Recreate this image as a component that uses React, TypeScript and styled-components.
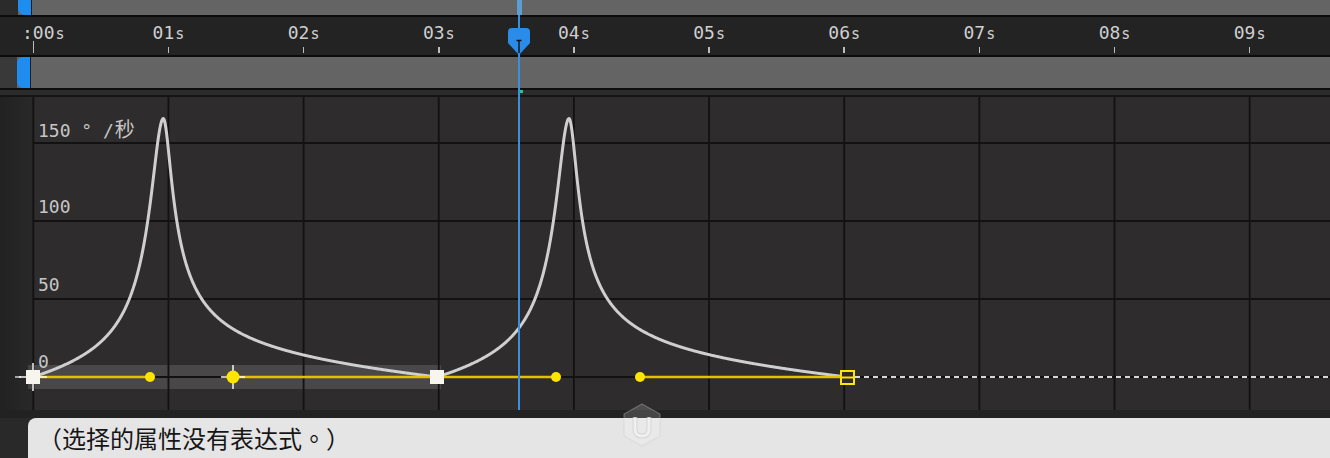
import React from "react";
import styled, { createGlobalStyle } from "styled-components";

const GlobalStyle = createGlobalStyle`
  html, body { margin: 0; padding: 0; background: #1f1f1f; }
  #root { width: 1330px; height: 458px; }
`;

const X0 = 33.3;
const STEP = 135.15;
const TICKS = Array.from({ length: 10 }, (_, i) => X0 + STEP * i);
const LABELS = [":00", "01", "02", "03", "04", "05", "06", "07", "08", "09"];
const PLAYHEAD_X = 519;

const Frame = styled.div`
  position: relative;
  width: 1330px;
  height: 458px;
  overflow: hidden;
  display: flex;
  flex-direction: column;
  background: #1f1f1f;
  font-family: "DejaVu Sans Mono", "Noto Sans CJK SC", monospace;
`;

const BarRow = styled.div<{ $h: number }>`
  display: flex;
  height: ${(p) => p.$h}px;
  flex: none;
`;

const Gutter = styled.div<{ $w: number; $bg: string }>`
  width: ${(p) => p.$w}px;
  flex: none;
  background: ${(p) => p.$bg};
`;

const Track = styled.div`
  flex: 1;
  display: flex;
  background: #646464;
`;

const Handle = styled.div<{ $top?: boolean }>`
  width: 13px;
  flex: none;
  background: #1f8cf0;
  border-right: 1px solid #1c1c1c;
  border-radius: ${(p) => (p.$top ? "0 0 0 7px" : "6px 0 0 6px")};
`;

const Rule = styled.div<{ $h?: number }>`
  height: ${(p) => p.$h ?? 2}px;
  flex: none;
  background: #0c0c0c;
`;

const Ruler = styled.div`
  position: relative;
  height: 38px;
  flex: none;
  background: #232323;
`;

const RulerLabel = styled.div<{ $first?: boolean }>`
  position: absolute;
  top: 7px;
  font-size: 18px;
  line-height: 18px;
  color: #cfcfcf;
  white-space: nowrap;
  transform: ${(p) => (p.$first ? "none" : "translateX(-50%)")};
`;

const Unit = styled.span`
  font-size: 15px;
  margin-left: 1px;
`;

const Tick = styled.div<{ $long?: boolean }>`
  position: absolute;
  bottom: 2px;
  width: 1.5px;
  height: ${(p) => (p.$long ? 12 : 6)}px;
  background: #bdbdbd;
`;

const Separator = styled.div`
  height: 9px;
  flex: none;
  background: #2b2b2b;
  border-top: 2px solid #0e0e0e;
  border-bottom: 2px solid #141414;
  box-sizing: border-box;
`;

const GraphArea = styled.div`
  position: relative;
  height: 313px;
  flex: none;
  background: #2e2c2c;
`;

const GraphSvg = styled.svg`
  display: block;
`;

const AxisLabel = styled.div`
  position: absolute;
  left: 38px;
  font-size: 18px;
  line-height: 18px;
  color: #c6c6c6;
  white-space: pre;
`;

const PerSecond = styled.span`
  font-family: "Noto Sans CJK SC", sans-serif;
  font-size: 20px;
  margin-left: 1px;
`;

const BottomStrip = styled.div`
  height: 8px;
  flex: none;
  background: #232222;
`;

const Footer = styled.div`
  flex: 1;
  display: flex;
  background: #2a2929;
`;

const Panel = styled.div`
  flex: 1;
  margin-left: 28px;
  padding-left: 10px;
  background: #e6e5e6;
  border-radius: 8px 0 0 0;
  font-family: "Noto Sans CJK SC", "Noto Sans", sans-serif;
  font-size: 24px;
  line-height: 40px;
  color: #161616;
`;

const CenteredStop = styled.span`
  font-family: "Noto Sans CJK TC", "Noto Sans CJK SC", sans-serif;
`;

const Playhead = styled.div`
  position: absolute;
  top: 0;
  left: ${PLAYHEAD_X}px;
  width: 0;
  height: 410px;
  pointer-events: none;
`;

const PlayLineTop = styled.div`
  position: absolute;
  top: 0;
  left: -2.5px;
  width: 5px;
  height: 15px;
  background: #5d9dd6;
`;

const PlayLine = styled.div`
  position: absolute;
  top: 15px;
  left: -0.75px;
  width: 1.5px;
  height: 395px;
  background: #3b90dc;
`;

const PlayHead = styled.svg`
  position: absolute;
  top: 28px;
  left: -11px;
`;

const GreenDot = styled.div`
  position: absolute;
  top: 90px;
  left: 1px;
  width: 3px;
  height: 3px;
  background: #2fc38a;
`;

const Watermark = styled.svg`
  position: absolute;
  left: 622px;
  top: 403px;
  pointer-events: none;
`;

type Pt = [number, number];

const GY = 97;
const BASE = 377;
const HEIGHT = 258.5;

function sideValue(d: number, D: number, q: number, w: number): number {
  const f = (x: number) => Math.pow(1 + (x / w) * (x / w), -q);
  return Math.max(0, f(d) - (f(D) * d) / D);
}

function speedCurve(peak: number, left: number, right: number): string {
  const pts: Pt[] = [];
  for (let x = left; x <= right + 0.01; x += 0.5) {
    const d = x - peak;
    const v = d < 0 ? sideValue(-d, peak - left, 0.55, 13) : sideValue(d, right - peak, 0.36, 7.8);
    pts.push([x, BASE - HEIGHT * v - GY]);
  }
  pts.push([peak, BASE - HEIGHT - GY]);
  pts.sort((a, b) => a[0] - b[0]);
  return pts.map(([x, y], i) => `${i ? "L" : "M"}${x.toFixed(2)} ${y.toFixed(2)}`).join(" ");
}

const ZERO = BASE - GY;
const YELLOW = "#e2c100";
const DOT = "#ffe500";

function Cross({ x, y, r }: { x: number; y: number; r: number }) {
  return (
    <g stroke="#ffffff" strokeWidth={1.6} opacity={0.9}>
      <line x1={x - r} y1={y} x2={x + r} y2={y} />
      <line x1={x} y1={y - r} x2={x} y2={y + r} />
    </g>
  );
}

function Graph() {
  const hLines = [46, 124, 202, ZERO];
  return (
    <GraphSvg width={1330} height={313} viewBox="0 0 1330 313">
      <defs>
        <linearGradient id="gutterShade" x1="0" x2="1" y1="0" y2="0">
          <stop offset="0" stopColor="#222121" />
          <stop offset="1" stopColor="#2a2929" />
        </linearGradient>
      </defs>
      <rect x={0} y={0} width={33} height={313} fill="url(#gutterShade)" />
      {/* selection band */}
      <rect x={28} y={268} width={413} height={24} fill="rgba(255,255,255,0.13)" />
      {hLines.map((y) => (
        <line key={y} x1={33} y1={y} x2={1330} y2={y} stroke="#131212" strokeWidth={1.8} />
      ))}
      {TICKS.map((x) => (
        <line key={x} x1={x} y1={0} x2={x} y2={313} stroke="#131212" strokeWidth={1.8} />
      ))}
      {/* dashed continuation */}
      <line x1={855} y1={ZERO} x2={1330} y2={ZERO} stroke="#d8d8d8" strokeWidth={2} strokeDasharray="5 4" />
      {/* speed curves */}
      <path d={speedCurve(163.3, 33, 437)} fill="none" stroke="#cfcfcf" strokeWidth={3} strokeLinejoin="round" strokeLinecap="round" />
      <path d={speedCurve(569, 437, 847)} fill="none" stroke="#cfcfcf" strokeWidth={3} strokeLinejoin="round" strokeLinecap="round" />
      {/* handle lines */}
      <g stroke={YELLOW} strokeWidth={2.5}>
        <line x1={33} y1={ZERO} x2={150} y2={ZERO} />
        <line x1={233} y1={ZERO} x2={437} y2={ZERO} />
        <line x1={437} y1={ZERO} x2={556} y2={ZERO} />
        <line x1={640} y1={ZERO} x2={847} y2={ZERO} />
      </g>
      <line x1={15} y1={ZERO} x2={21} y2={ZERO} stroke="#cfcfcf" strokeWidth={1.5} />
      {/* handles */}
      <circle cx={150} cy={ZERO} r={5} fill={DOT} />
      <circle cx={556} cy={ZERO} r={5} fill={DOT} />
      <circle cx={640} cy={ZERO} r={5} fill={DOT} />
      <Cross x={233} y={ZERO} r={12} />
      <circle cx={233} cy={ZERO} r={6.5} fill={DOT} />
      {/* keyframes */}
      <Cross x={33} y={ZERO} r={14} />
      <rect x={26} y={ZERO - 7} width={14} height={14} fill="#f6f5ee" />
      <rect x={430} y={ZERO - 7} width={14} height={14} fill="#f6f5ee" />
      <g stroke={DOT} strokeWidth={2} fill="#2e2c2c">
        <rect x={841} y={ZERO - 6} width={13} height={13} />
        <line x1={841} y1={ZERO + 0.5} x2={854} y2={ZERO + 0.5} />
      </g>
    </GraphSvg>
  );
}

export default function App() {
  return (
    <>
      <GlobalStyle />
      <Frame>
        <BarRow $h={15}>
          <Gutter $w={18} $bg="#2b2b2b" />
          <Track>
            <Handle $top />
          </Track>
        </BarRow>
        <Rule />
        <Ruler>
          {TICKS.map((x, i) => (
            <React.Fragment key={i}>
              <RulerLabel $first={i === 0} style={{ left: i === 0 ? 22 : x }}>
                {LABELS[i]}
                <Unit>s</Unit>
              </RulerLabel>
              <Tick $long={i === 0} style={{ left: x - 0.75 }} />
            </React.Fragment>
          ))}
        </Ruler>
        <Rule />
        <BarRow $h={31}>
          <Gutter $w={17} $bg="#393939" />
          <Track>
            <Handle />
          </Track>
        </BarRow>
        <Separator />
        <GraphArea>
          <Graph />
          <AxisLabel style={{ top: 23 }}>
            {"150 ° /"}
            <PerSecond>秒</PerSecond>
          </AxisLabel>
          <AxisLabel style={{ top: 101 }}>100</AxisLabel>
          <AxisLabel style={{ top: 179 }}>50</AxisLabel>
          <AxisLabel style={{ top: 256 }}>0</AxisLabel>
        </GraphArea>
        <BottomStrip />
        <Footer>
          <Panel>
            （选择的属性没有表达式<CenteredStop>。</CenteredStop>）
          </Panel>
        </Footer>
        <Playhead>
          <PlayLineTop />
          <PlayLine />
          <PlayHead width={22} height={28} viewBox="0 0 22 28">
            <path d="M0 4 Q0 0 4 0 H18 Q22 0 22 4 V15 L11 27 L0 15 Z" fill="#2a8ce8" />
            <path d="M8.5 12.5 H13.5 M11 12.5 V25" stroke="#111" strokeWidth={1.4} />
          </PlayHead>
          <GreenDot />
        </Playhead>
        <Watermark width={40} height={44} viewBox="0 0 40 44">
          <path d="M20 1 L38 11 V33 L20 43 L2 33 V11 Z" fill="rgba(255,255,255,0.16)" stroke="rgba(200,200,200,0.35)" strokeWidth={1.2} />
          <path d="M13 14 V26 Q13 33 20 33 Q27 33 27 26 V14" fill="none" stroke="rgba(190,190,190,0.45)" strokeWidth={5} />
          <path d="M13 14 V26 Q13 33 20 33 Q27 33 27 26 V14" fill="none" stroke="rgba(255,255,255,0.6)" strokeWidth={3} />
        </Watermark>
      </Frame>
    </>
  );
}
